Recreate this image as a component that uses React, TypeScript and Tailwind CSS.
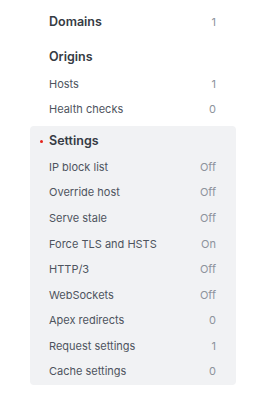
import React from 'react';

const origins = [
  { label: 'Hosts', value: '1' },
  { label: 'Health checks', value: '0' },
];

const settings = [
  { label: 'IP block list', value: 'Off' },
  { label: 'Override host', value: 'Off' },
  { label: 'Serve stale', value: 'Off' },
  { label: 'Force TLS and HSTS', value: 'On' },
  { label: 'HTTP/3', value: 'Off' },
  { label: 'WebSockets', value: 'Off' },
  { label: 'Apex redirects', value: '0' },
  { label: 'Request settings', value: '1' },
  { label: 'Cache settings', value: '0' },
];

const Row: React.FC<{ label: string; value: string }> = ({ label, value }) => (
  <div className="flex h-[25.6px] items-center justify-between text-[11px] text-[#4e545e]">
    <span>{label}</span>
    <span className="text-[#8d939c]">{value}</span>
  </div>
);

export default function App() {
  return (
    <div className="w-[270px] h-[400px] bg-white pt-[9px] pl-[30px]" style={{ fontFamily: 'Inter, "Noto Sans", sans-serif' }}>
      <div className="w-[206px]">
        <div className="px-[19px] pr-[20px]">
          <div className="flex h-[26px] items-center justify-between">
            <span className="text-[12.5px] font-semibold text-[#363b44]">Domains</span>
            <span className="text-[11px] text-[#8d939c]">1</span>
          </div>
          <div className="mt-[9px] flex h-[26px] items-center">
            <span className="text-[12.5px] font-semibold text-[#363b44]">Origins</span>
          </div>
          <div className="mt-[1px]">
            {origins.map((r) => (
              <Row key={r.label} {...r} />
            ))}
          </div>
        </div>

        <div className="mt-[4px] rounded bg-[#f1f2f4] pt-[2px] pl-[19px] pr-[20px]">
          <div className="relative flex h-[26px] items-center">
            <span className="absolute left-[-9px] top-[11.5px] h-[3px] w-[3px] rounded-full bg-[#e5231b]" />
            <span className="text-[12.5px] font-semibold text-[#363b44]">Settings</span>
          </div>
          {settings.map((r) => (
            <Row key={r.label} {...r} />
          ))}
        </div>
      </div>
    </div>
  );
}
